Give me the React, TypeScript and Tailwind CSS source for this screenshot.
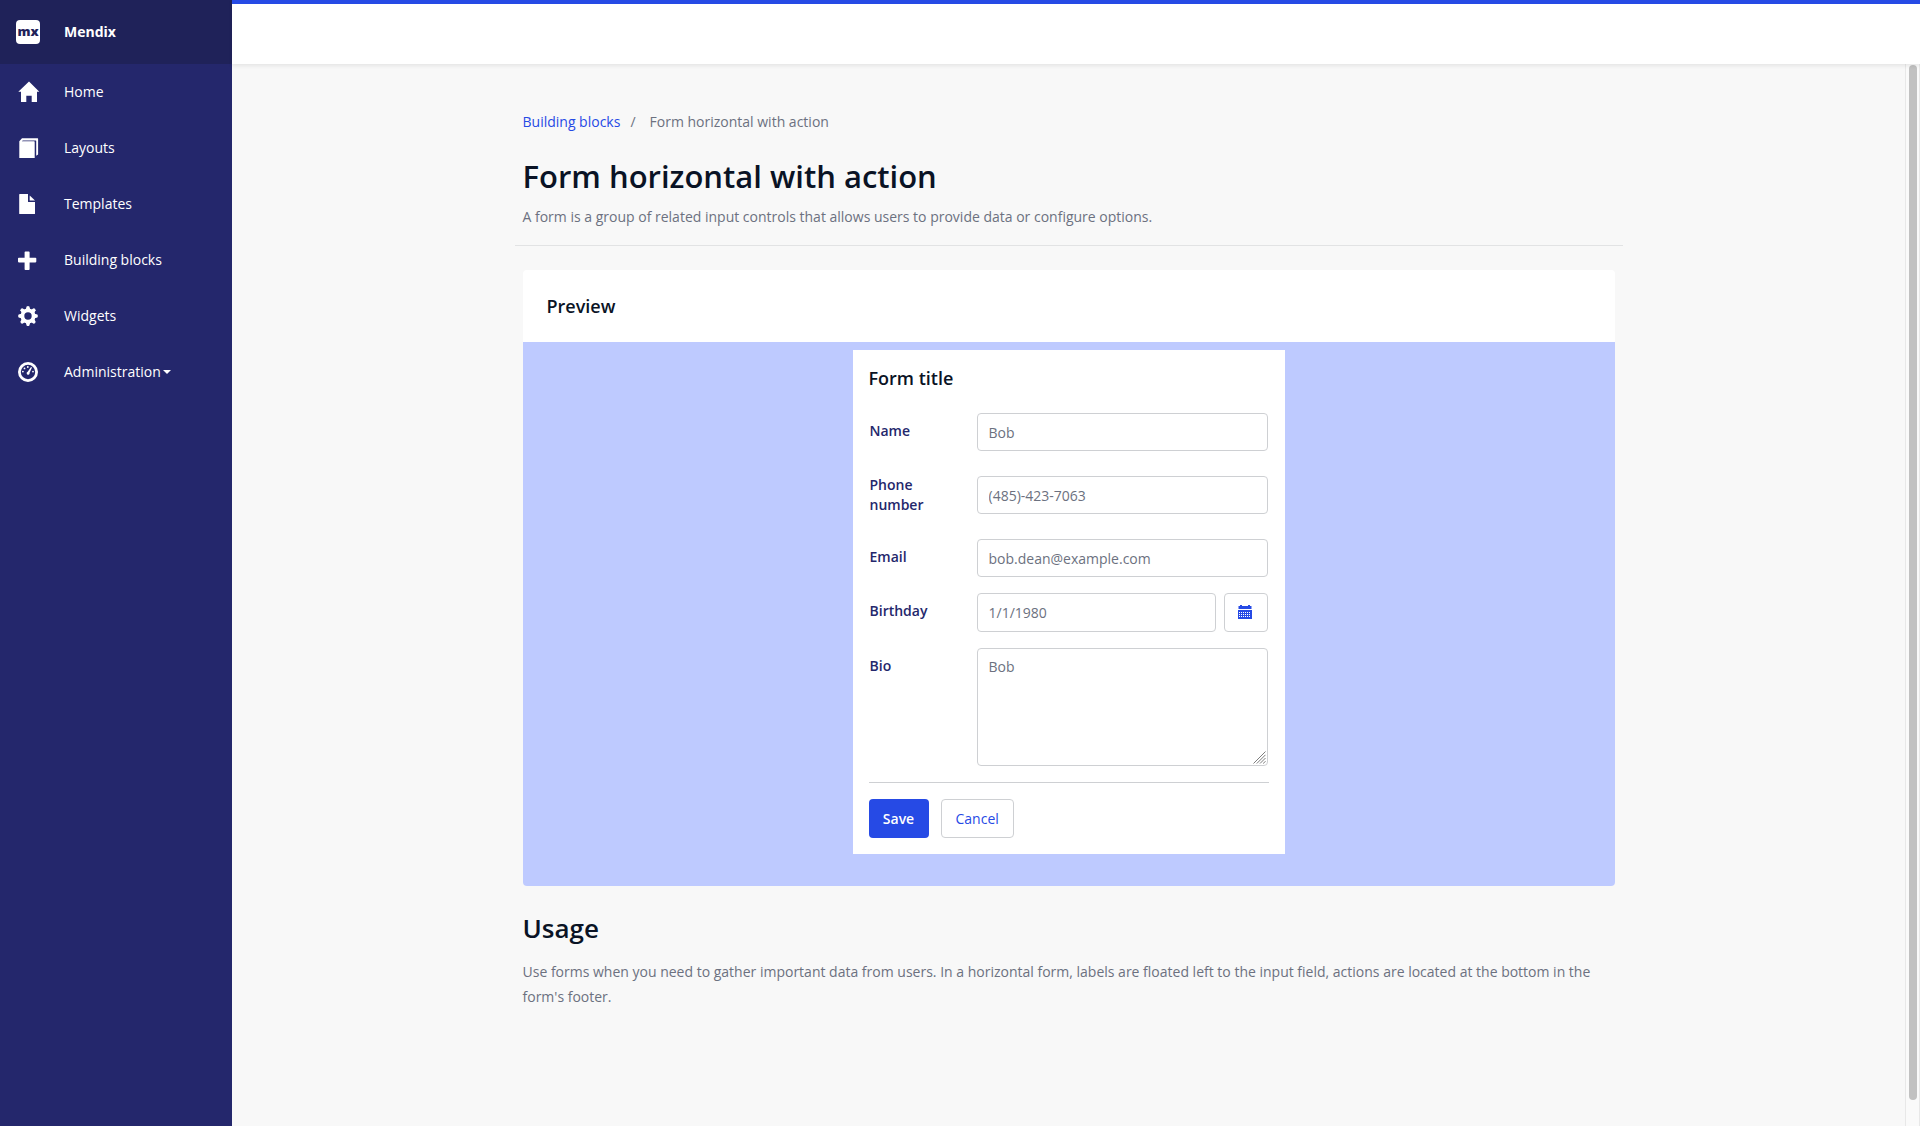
import type { ReactNode } from "react";

const HomeIcon = () => (
  <path d="M12 1.6 22.3 11.7H20V22h-5.3v-6.3H9.3V22H4V11.7H1.3Z" />
);

const PagesIcon = () => (
  <path d="M2.3 22V5.2L5 2.3h15.7a.4.4 0 0 1 .4.4v15.8l-1.9 1.2V4.8a.4.4 0 0 0-.4-.4H5.8l-1 .9h12.3a.6.6 0 0 1 .6.6V22Z" />
);

const FileIcon = () => (
  <>
    <path d="M2.8 2H11v7.4a.6.6 0 0 0 .6.6H18v11.4a.6.6 0 0 1-.6.6H2.8a.6.6 0 0 1-.6-.6V2.6a.6.6 0 0 1 .6-.6Z" />
    <path d="M12.7 3.5 18 8.6h-5.3Z" />
  </>
);

const PlusIcon = () => (
  <path d="M8.4 3.4h3.4a.8.8 0 0 1 .8.8v5.6h5.9a.8.8 0 0 1 .8.8v3a.8.8 0 0 1-.8.8h-5.9v6.9a.8.8 0 0 1-.8.8H8.4a.8.8 0 0 1-.8-.8v-6.9H1.8a.8.8 0 0 1-.8-.8v-3a.8.8 0 0 1 .8-.8h5.8V4.2a.8.8 0 0 1 .8-.8Z" />
);

const GearIcon = () => (
  <>
    <circle cx="11" cy="12" r="5.6" fill="none" stroke="currentColor" strokeWidth="3.8" />
    {[0, 45, 90, 135, 180, 225, 270, 315].map((angle) => (
      <path key={angle} d="M8.8 5.4 9.6 2.6q1.4-1.1 2.8 0l.8 2.8Z" transform={`rotate(${angle} 11 12)`} />
    ))}
  </>
);

const GaugeIcon = () => (
  <>
    <circle cx="11" cy="12" r="8.6" fill="none" stroke="currentColor" strokeWidth="2.8" />
    <circle cx="5.9" cy="11.6" r=".9" />
    <circle cx="7.5" cy="8.4" r=".9" />
    <circle cx="10.8" cy="7" r=".9" />
    <circle cx="16" cy="11.6" r=".9" />
    <path d="m14 6.9 1 .6-2.4 5.3a1.5 1.5 0 1 1-1.9-1Z" />
  </>
);

const navItems: { label: string; icon: ReactNode; menu?: boolean }[] = [
  { label: "Home", icon: <HomeIcon /> },
  { label: "Layouts", icon: <PagesIcon /> },
  { label: "Templates", icon: <FileIcon /> },
  { label: "Building blocks", icon: <PlusIcon /> },
  { label: "Widgets", icon: <GearIcon /> },
  { label: "Administration", icon: <GaugeIcon />, menu: true },
];

function Sidebar() {
  return (
    <aside className="w-[232px] shrink-0 bg-[#24276c] text-sm text-white">
      <div className="flex h-16 items-center gap-6 bg-[#1f2259] px-4 font-bold">
        <span className="flex size-6 items-center justify-center rounded bg-white pb-0.5 text-[13px] leading-none font-extrabold text-[#1f2259]">
          mx
        </span>
        <span>Mendix</span>
      </div>
      <nav>
        <ul>
          {navItems.map((item) => (
            <li key={item.label}>
              <a href="#" className="flex h-14 items-center px-4">
                <svg viewBox="0 0 24 24" className="mr-6 size-6 translate-x-px" fill="currentColor" aria-hidden="true">
                  {item.icon}
                </svg>
                {item.label}
                {item.menu && (
                  <svg viewBox="0 0 8 4" className="ml-0.5 h-1 w-2" fill="currentColor" aria-hidden="true">
                    <path d="M0 0h8L4 4Z" />
                  </svg>
                )}
              </a>
            </li>
          ))}
        </ul>
      </nav>
    </aside>
  );
}

const fieldClass =
  "block w-full min-w-0 rounded border border-[#ced0d3] bg-white px-[11px] text-sm text-[#6c7180] outline-none";

function Field({ id, label, children }: { id: string; label: string; children: ReactNode }) {
  return (
    <div className="grid grid-cols-[107px_1fr] px-px">
      <label htmlFor={id} className="pt-2 pr-6 font-semibold leading-5 text-[#24276c]">
        {label}
      </label>
      {children}
    </div>
  );
}

function CalendarIcon() {
  return (
    <svg viewBox="0 0 14 14" className="size-[14px]" fill="currentColor" aria-hidden="true">
      <path d="M2 0h2v1h6V0h2v1h1.5v3H.5V1H2Z" />
      <path
        fillRule="evenodd"
        d="M0 5h14v9H0ZM1 7v1h1V7Zm2 0v1h1V7Zm2 0v1h1V7Zm2 0v1h1V7Zm2 0v1h1V7Zm2 0v1h1V7ZM1 9v1h1V9Zm2 0v1h1V9Zm2 0v1h1V9Zm2 0v1h1V9Zm2 0v1h1V9Zm2 0v1h1V9ZM1 11v1h1v-1Zm2 0v1h1v-1Zm2 0v1h1v-1Zm2 0v1h1v-1Zm2 0v1h1v-1Zm2 0v1h1v-1Z"
      />
    </svg>
  );
}

function ResizeGrip() {
  return (
    <svg
      viewBox="0 0 13 13"
      className="pointer-events-none absolute right-0.5 bottom-0.5 size-[13px]"
      fill="none"
      stroke="#7d7d7d"
      aria-hidden="true"
    >
      <path d="M.5 12.5l12-12M3.8 12.5l8.7-8.7M7 12.5 12.5 7M10.2 12.5l2.3-2.3" />
    </svg>
  );
}

function ProfileForm() {
  return (
    <form className="mx-auto w-full max-w-[432px] bg-white p-4" onSubmit={(e) => e.preventDefault()}>
      <h3 className="text-lg leading-6 font-semibold text-[#0a1325]">Form title</h3>
      <div className="mt-[23px] flex flex-col gap-4">
        <div className="flex flex-col gap-6">
          <Field id="name" label="Name">
            <input id="name" type="text" defaultValue="Bob" className={`${fieldClass} h-[38px]`} />
          </Field>
          <div className="grid grid-cols-[107px_1fr] items-center px-px">
            <label htmlFor="phone" className="pr-6 leading-5 font-semibold text-[#24276c]">
              Phone number
            </label>
            <input id="phone" type="tel" defaultValue="(485)-423-7063" className={`${fieldClass} h-[38px]`} />
          </div>
          <Field id="email" label="Email">
            <input id="email" type="email" defaultValue="bob.dean@example.com" className={`${fieldClass} h-[38px]`} />
          </Field>
        </div>
        <Field id="birthday" label="Birthday">
          <div className="flex gap-2">
            <input id="birthday" type="text" defaultValue="1/1/1980" className={`${fieldClass} h-[39px]`} />
            <button
              type="button"
              aria-label="Show date picker"
              className="flex h-[39px] w-11 shrink-0 items-center justify-center rounded border border-[#ced0d3] bg-white pr-0.5 pb-px text-[#264ae5]"
            >
              <CalendarIcon />
            </button>
          </div>
        </Field>
        <Field id="bio" label="Bio">
          <div className="relative">
            <textarea
              id="bio"
              defaultValue="Bob"
              className={`${fieldClass} h-[118px] resize-none py-2`}
            />
            <ResizeGrip />
          </div>
        </Field>
      </div>
      <div className="mt-4 flex gap-3 border-t border-[#ced0d3] pt-4">
        <button type="submit" className="h-[39px] w-[60px] rounded bg-[#264ae5] font-semibold text-white">
          Save
        </button>
        <button type="button" className="h-[39px] rounded border border-[#ced0d3] bg-white px-[14px] text-[#264ae5]">
          Cancel
        </button>
      </div>
    </form>
  );
}

export default function App() {
  return (
    <div className="flex min-h-screen bg-[#f8f8f8] font-['Open_Sans',sans-serif] text-sm text-[#6c7180]">
      <Sidebar />
      <div className="flex min-w-0 flex-1 flex-col">
        <header className="relative h-16 shrink-0 border-t-4 border-[#264ae5] bg-white shadow-[0_2px_4px_rgba(0,0,0,0.08)]" />
        <div className="flex flex-1">
          <main className="flex-1 px-4 pt-12">
            <div className="mx-auto max-w-[1092px]">
              <nav aria-label="Breadcrumb">
                <ol className="flex leading-5">
                  <li>
                    <a href="#" className="text-[#264ae5]">
                      Building blocks
                    </a>
                  </li>
                  <li className="px-[10px]" aria-hidden="true">
                    /
                  </li>
                  <li className="pl-1">Form horizontal with action</li>
                </ol>
              </nav>
              <h1 className="mt-6 text-[31px] leading-10 font-semibold text-[#0a1325]">Form horizontal with action</h1>
              <p className="mt-2 leading-[25px]">
                A form is a group of related input controls that allows users to provide data or configure options.
              </p>
              <hr className="-mx-2 mt-4 border-[#e2e3e4]" />
              <section className="mt-6 overflow-hidden rounded bg-white">
                <h2 className="px-6 py-6 text-lg leading-6 font-semibold text-[#0a1325]">Preview</h2>
                <div className="bg-[#becaff] px-2 pt-2 pb-8">
                  <ProfileForm />
                </div>
              </section>
              <section className="mt-6">
                <h2 className="text-[26px] leading-9 font-semibold text-[#0a1325]">Usage</h2>
                <p className="mt-[13px] leading-[25px]">
                  Use forms when you need to gather important data from users. In a horizontal form, labels are floated
                  left to the input field, actions are located at the bottom in the form's footer.
                </p>
              </section>
            </div>
          </main>
          <div className="flex w-[15px] shrink-0 justify-center border-x border-[#e8e8e8] bg-[#fafafa] pt-px pb-[26px]">
            <div className="w-2 rounded-full bg-[#c1c1c1]" />
          </div>
        </div>
      </div>
    </div>
  );
}
